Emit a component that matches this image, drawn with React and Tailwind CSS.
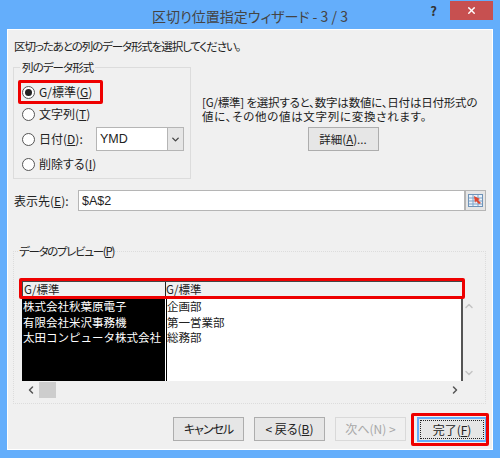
import { ChevronDown, ChevronLeft, ChevronRight, ChevronUp, X } from 'lucide-react'

const FONT = 'font-["Noto_Sans_CJK_JP","Liberation_Sans",sans-serif] [font-feature-settings:"palt"]'

function Key({ children }) {
  return <span className="underline">{children}</span>
}

function Radio({ checked, children }) {
  return (
    <div className="flex items-center gap-[4px] h-[14px]">
      <span className="w-[13px] h-[13px] rounded-full border border-[#555] bg-white flex items-center justify-center">
        {checked && <span className="w-[7px] h-[7px] rounded-full bg-[#222]" />}
      </span>
      <span>{children}</span>
    </div>
  )
}

function Btn({ children, className = '', disabled }) {
  return (
    <div
      className={`h-[24px] w-[71px] flex items-center justify-center border ${
        disabled ? 'border-[#d9d9d9] text-[#a8a8a8]' : 'border-[#adadad] bg-[#e6e6e6]'
      } ${className}`}
    >
      {children}
    </div>
  )
}

function RangeIcon() {
  return (
    <svg width="15" height="15" viewBox="0 0 15 15">
      <rect x="0.5" y="1.5" width="14" height="12" fill="#eaf2fa" stroke="#6f93b8" />
      <path d="M1 5h13M1 8h13M1 11h13M5 2v11M10 2v11" stroke="#7fa3c7" />
      <path d="M6 3l6 3-2 1 3 3-2 1-3-3-1 2z" fill="#e0452e" />
    </svg>
  )
}

export default function App() {
  return (
    <div className={`relative w-[500px] h-[458px] bg-[#64aefb] overflow-hidden text-[12px] leading-[14px] text-[#222] ${FONT}`}>
      {/* title bar */}
      <div className="relative h-[29px] flex items-center justify-center text-[14px] text-[#444] pt-[2px]">
        <span>区切り位置指定ウィザード - 3 / 3</span>
        <div className="absolute right-[7px] top-px flex items-start">
          <span className="w-[33px] text-center text-[13px] font-bold text-[#333] leading-[20px]">?</span>
          <div className="w-[43px] h-[19px] bg-[#c75050] flex items-center justify-center text-white">
            <X size={11} strokeWidth={3} />
          </div>
        </div>
      </div>

      {/* client area */}
      <div className="mx-[7px] h-[421px] border border-white bg-[#f0f0f0] flex flex-col px-[5px]">
        <div className="mt-[9px] pl-px h-[14px] whitespace-nowrap text-[11.5px] tracking-[-1.1px]">区切ったあとの列のデータ形式を選択してください。</div>

        <div className="mt-[7px] flex h-[119px]">
          <fieldset className="w-[178px] shrink-0 border border-[#dcdcdc] pl-[8px] min-w-0">
            <legend className="ml-[-2px] px-[2px] text-[11.5px] tracking-[-0.9px] leading-[14px]">列のデータ形式</legend>
            <div className="flex flex-col pt-[11px]">
              <Radio checked>G/標準(<Key>G</Key>)</Radio>
              <div className="mt-[8px]"><Radio>文字列(<Key>T</Key>)</Radio></div>
              <div className="mt-[6px] flex items-center">
                <div className="w-[74px] shrink-0"><Radio>日付(<Key>D</Key>):</Radio></div>
                <div className="w-[88px] shrink-0 h-[24px] bg-white border border-[#b5b5b5] flex items-center justify-between pl-[3px]">
                  <span className="font-['Liberation_Sans'] text-[12.5px]">YMD</span>
                  <span className="w-[16px] h-full bg-[#e6e6e6] border-l border-[#b5b5b5] flex items-center justify-center">
                    <ChevronDown size={11} strokeWidth={3} className="text-[#444]" />
                  </span>
                </div>
              </div>
              <div className="mt-[6px]"><Radio>削除する(<Key>I</Key>)</Radio></div>
            </div>
          </fieldset>

          <div className="ml-[11px] flex-1 min-w-0 flex flex-col items-center pt-[35px] text-[11.5px]">
            <p className="w-full whitespace-nowrap tracking-[-0.2px]">[G/標準] を選択すると、数字は数値に、日付は日付形式の</p>
            <p className="w-full whitespace-nowrap tracking-[0.7px]">値に、その他の値は文字列に変換されます。</p>
            <Btn className="mt-[4px] ml-[-3px]">詳細(<Key>A</Key>)...</Btn>
          </div>
        </div>

        <div className="mt-[11px] flex items-center h-[21px]">
          <span className="w-[65px] pl-px whitespace-nowrap">表示先(<Key>E</Key>):</span>
          <div className="w-[387px] h-full bg-white border border-[#b5b5b5] flex items-center pl-[3px] font-['Liberation_Sans'] text-[12.5px]">$A$2</div>
          <div className="w-[21px] h-full bg-[#e6e6e6] border border-[#b5b5b5] flex items-center justify-center">
            <RangeIcon />
          </div>
        </div>

        <fieldset className="mt-[33px] w-[473px] h-[160px] border border-[#dcdcdc] border-dotted min-w-0">
          <legend className="ml-[5px] text-[11.5px] tracking-[-1.3px] leading-[14px]">データのプレビュー(<Key>P</Key>)</legend>
          <div className="mt-[23px] ml-[8px] w-[441px] text-[11.5px] leading-[15.5px]">
            <div className="flex h-[16px] border-t border-l border-[#444] [font-feature-settings:normal]">
              <div className="w-[143px] pl-px border-r border-[#222] bg-[#f0f0f0] whitespace-nowrap">G/標準</div>
              <div className="flex-1 border-r border-[#444] bg-[#f0f0f0] whitespace-nowrap">G/標準</div>
            </div>
            <div className="flex h-[84px] [font-feature-settings:normal]">
              <div className="w-[143px] pl-px bg-black text-white whitespace-nowrap pt-[2px]">
                <div>株式会社秋葉原電子</div>
                <div>有限会社米沢事務機</div>
                <div>太田コンピュータ株式会社</div>
              </div>
              <div className="w-px bg-white" />
              <div className="w-px bg-black" />
              <div className="flex-1 bg-white border-r-2 border-[#555] pt-[2px] whitespace-nowrap">
                <div>企画部</div>
                <div>第一営業部</div>
                <div>総務部</div>
              </div>
            </div>
          </div>
          <div className="ml-[8px] flex items-center h-[17px] w-[441px]">
            <ChevronLeft size={12} strokeWidth={3} className="text-[#555] ml-[3px]" />
            <span className="ml-[2px] w-[17px] h-[16px] bg-[#cdcdcd]" />
            <ChevronRight size={12} strokeWidth={3} className="text-[#555] ml-auto mr-[2px]" />
          </div>
        </fieldset>

        <div className="mt-[13px] flex items-start">
          <Btn className="ml-[160px] tracking-[-1px]">キャンセル</Btn>
          <Btn className="ml-[10px]">&lt; 戻る(<Key>B</Key>)</Btn>
          <Btn className="ml-[10px]" disabled>次へ(N) &gt;</Btn>
          <div className="ml-[11px] w-[70px] h-[25px] border-2 border-[#64aefb] bg-[#e6e6e6] flex items-center justify-center outline-1 outline-dotted outline-offset-[-4px] outline-[#222]">
            完了(<Key>F</Key>)
          </div>
        </div>
      </div>

      {/* red annotation boxes */}
      <div className="absolute left-[18px] top-[80px] w-[85px] h-[24px] border-[3px] border-[#ee0000] rounded-[2px]" />
      <div className="absolute left-[19px] top-[278px] w-[446px] h-[21px] border-[3px] border-[#ee0000] rounded-[2px]" />
      <div className="absolute left-[411px] top-[413px] w-[78px] h-[33px] border-[3px] border-[#ee0000] rounded-[2px]" />

      {/* preview scroll arrows */}
      <div className="absolute left-[463px] top-[300px] h-[79px] flex flex-col justify-between text-[#c4c4c4]">
        <ChevronUp size={12} strokeWidth={3} />
        <ChevronDown size={12} strokeWidth={3} />
      </div>
    </div>
  )
}
